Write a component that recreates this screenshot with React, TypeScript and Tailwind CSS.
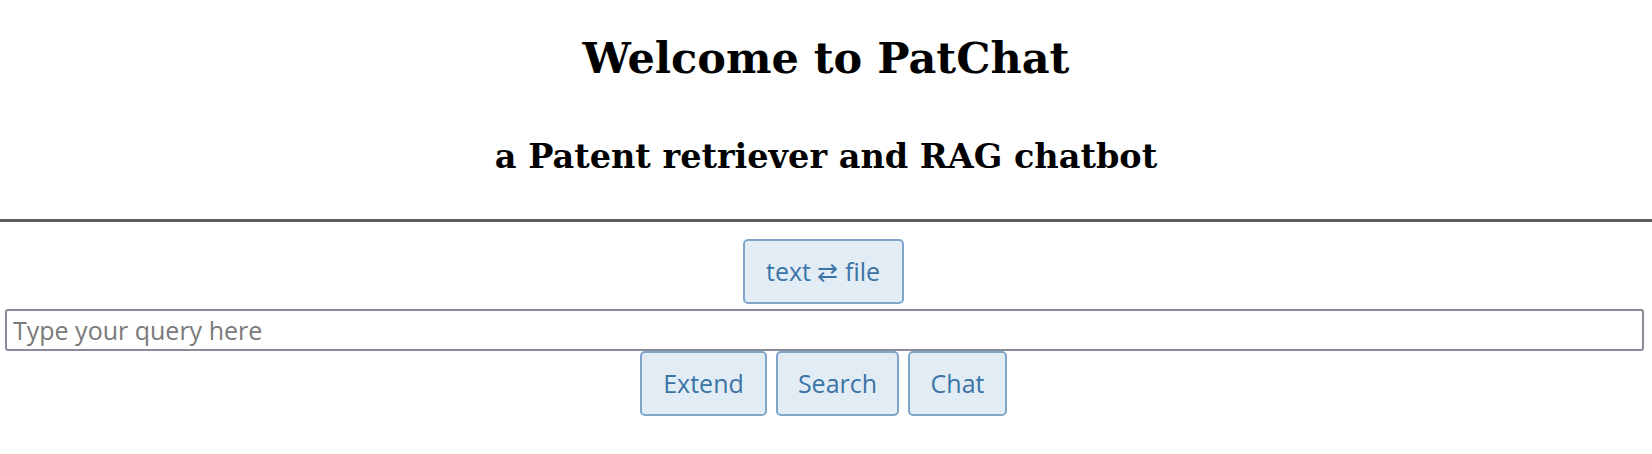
import { useState } from "react";

const btn =
  "h-[65px] rounded-[5px] border-2 border-[#7fa6c9] bg-[#e2ecf5] text-[#3a74a6] text-[25px] font-['Open_Sans',sans-serif]";

const App = () => {
  const [mode, setMode] = useState<"text" | "file">("text");
  const [query, setQuery] = useState("");

  return (
    <div className="w-full bg-white text-center text-black">
      <h1 className="mt-[33px] text-[43px] leading-[50px] font-bold font-['DejaVu_Serif',serif]">
        Welcome to PatChat
      </h1>
      <h2 className="mt-[55px] text-[33.5px] leading-[38px] font-bold font-['DejaVu_Serif',serif]">
        a Patent retriever and RAG chatbot
      </h2>
      <div className="mt-[43px] border-t-[3px] border-[#5e5e5e]" />

      <div className="mt-[17px] flex justify-center pr-[6px]">
        <button
          className={`${btn} w-[161px]`}
          onClick={() => setMode(mode === "text" ? "file" : "text")}
        >
          text ⇄ file
        </button>
      </div>

      <div className="mt-[5px] pl-[5px] pr-[8px]">
        <input
          value={query}
          onChange={(e) => setQuery(e.target.value)}
          placeholder="Type your query here"
          className="block h-[42px] w-full rounded-[3px] border-2 border-[#8b8a99] px-[6px] text-[25px] font-['Open_Sans',sans-serif] placeholder:text-[#7a7a7a] outline-none"
        />
      </div>

      <div className="mt-0 flex justify-center gap-[9px] pr-[5px]">
        <button className={`${btn} w-[127px]`}>Extend</button>
        <button className={`${btn} w-[123px]`}>Search</button>
        <button className={`${btn} w-[99px]`}>Chat</button>
      </div>
    </div>
  );
};

export default App;
